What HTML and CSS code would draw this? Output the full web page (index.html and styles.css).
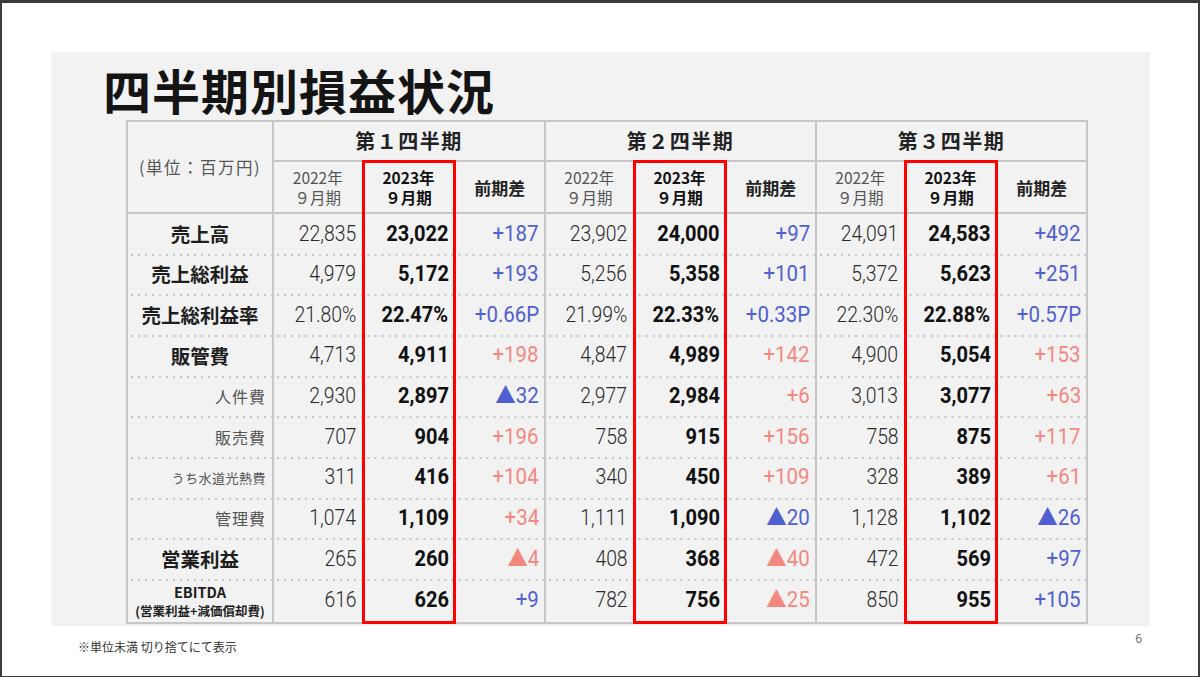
FILE: index.html
```html
<!DOCTYPE html>
<html lang="ja">
<head>
<meta charset="utf-8">
<title>四半期別損益状況</title>
<link rel="stylesheet" href="styles.css">
</head>
<body>
<div class="frame">
  <div class="panel">
    <h1 class="title">四半期別損益状況</h1>
    <table class="pl">
      <colgroup>
        <col class="c-label">
        <col class="c90"><col class="c91"><col class="c91">
        <col class="c89"><col class="c91"><col class="c91">
        <col class="c89"><col class="c91"><col class="c91">
      </colgroup>
      <thead>
        <tr class="h1row">
          <th class="unit" rowspan="2">(単位：百万円)</th>
          <th class="qh" colspan="3">第１四半期</th>
          <th class="qh" colspan="3">第２四半期</th>
          <th class="qh" colspan="3">第３四半期</th>
        </tr>
        <tr class="h2row">
          <th class="sh prev q"><span class="l1">2022年</span><span class="l2">９月期</span></th>
          <th class="sh cur hl"><span class="l1">2023年</span><span class="l2">９月期</span></th>
          <th class="sh diffh">前期差</th>
          <th class="sh prev q"><span class="l1">2022年</span><span class="l2">９月期</span></th>
          <th class="sh cur hl"><span class="l1">2023年</span><span class="l2">９月期</span></th>
          <th class="sh diffh">前期差</th>
          <th class="sh prev q"><span class="l1">2022年</span><span class="l2">９月期</span></th>
          <th class="sh cur hl"><span class="l1">2023年</span><span class="l2">９月期</span></th>
          <th class="sh diffh">前期差</th>
        </tr>
      </thead>
      <tbody>
        <tr class="first">
          <th class="lab main">売上高</th>
          <td class="prev q"><span class="n">22,835</span></td><td class="cur hl"><span class="n">23,022</span></td><td class="diff up"><span class="n">+187</span></td>
          <td class="prev q"><span class="n">23,902</span></td><td class="cur hl"><span class="n">24,000</span></td><td class="diff up"><span class="n">+97</span></td>
          <td class="prev q"><span class="n">24,091</span></td><td class="cur hl"><span class="n">24,583</span></td><td class="diff up"><span class="n">+492</span></td>
        </tr>
        <tr>
          <th class="lab main">売上総利益</th>
          <td class="prev q"><span class="n">4,979</span></td><td class="cur hl"><span class="n">5,172</span></td><td class="diff up"><span class="n">+193</span></td>
          <td class="prev q"><span class="n">5,256</span></td><td class="cur hl"><span class="n">5,358</span></td><td class="diff up"><span class="n">+101</span></td>
          <td class="prev q"><span class="n">5,372</span></td><td class="cur hl"><span class="n">5,623</span></td><td class="diff up"><span class="n">+251</span></td>
        </tr>
        <tr>
          <th class="lab main">売上総利益率</th>
          <td class="prev q"><span class="n">21.80%</span></td><td class="cur hl"><span class="n">22.47%</span></td><td class="diff up"><span class="n">+0.66P</span></td>
          <td class="prev q"><span class="n">21.99%</span></td><td class="cur hl"><span class="n">22.33%</span></td><td class="diff up"><span class="n">+0.33P</span></td>
          <td class="prev q"><span class="n">22.30%</span></td><td class="cur hl"><span class="n">22.88%</span></td><td class="diff up"><span class="n">+0.57P</span></td>
        </tr>
        <tr>
          <th class="lab main">販管費</th>
          <td class="prev q"><span class="n">4,713</span></td><td class="cur hl"><span class="n">4,911</span></td><td class="diff dn"><span class="n">+198</span></td>
          <td class="prev q"><span class="n">4,847</span></td><td class="cur hl"><span class="n">4,989</span></td><td class="diff dn"><span class="n">+142</span></td>
          <td class="prev q"><span class="n">4,900</span></td><td class="cur hl"><span class="n">5,054</span></td><td class="diff dn"><span class="n">+153</span></td>
        </tr>
        <tr>
          <th class="lab sub">人件費</th>
          <td class="prev q"><span class="n">2,930</span></td><td class="cur hl"><span class="n">2,897</span></td><td class="diff up"><span class="n">▲32</span></td>
          <td class="prev q"><span class="n">2,977</span></td><td class="cur hl"><span class="n">2,984</span></td><td class="diff dn"><span class="n">+6</span></td>
          <td class="prev q"><span class="n">3,013</span></td><td class="cur hl"><span class="n">3,077</span></td><td class="diff dn"><span class="n">+63</span></td>
        </tr>
        <tr>
          <th class="lab sub">販売費</th>
          <td class="prev q"><span class="n">707</span></td><td class="cur hl"><span class="n">904</span></td><td class="diff dn"><span class="n">+196</span></td>
          <td class="prev q"><span class="n">758</span></td><td class="cur hl"><span class="n">915</span></td><td class="diff dn"><span class="n">+156</span></td>
          <td class="prev q"><span class="n">758</span></td><td class="cur hl"><span class="n">875</span></td><td class="diff dn"><span class="n">+117</span></td>
        </tr>
        <tr>
          <th class="lab sub small">うち水道光熱費</th>
          <td class="prev q"><span class="n">311</span></td><td class="cur hl"><span class="n">416</span></td><td class="diff dn"><span class="n">+104</span></td>
          <td class="prev q"><span class="n">340</span></td><td class="cur hl"><span class="n">450</span></td><td class="diff dn"><span class="n">+109</span></td>
          <td class="prev q"><span class="n">328</span></td><td class="cur hl"><span class="n">389</span></td><td class="diff dn"><span class="n">+61</span></td>
        </tr>
        <tr>
          <th class="lab sub">管理費</th>
          <td class="prev q"><span class="n">1,074</span></td><td class="cur hl"><span class="n">1,109</span></td><td class="diff dn"><span class="n">+34</span></td>
          <td class="prev q"><span class="n">1,111</span></td><td class="cur hl"><span class="n">1,090</span></td><td class="diff up"><span class="n">▲20</span></td>
          <td class="prev q"><span class="n">1,128</span></td><td class="cur hl"><span class="n">1,102</span></td><td class="diff up"><span class="n">▲26</span></td>
        </tr>
        <tr>
          <th class="lab main">営業利益</th>
          <td class="prev q"><span class="n">265</span></td><td class="cur hl"><span class="n">260</span></td><td class="diff dn"><span class="n">▲4</span></td>
          <td class="prev q"><span class="n">408</span></td><td class="cur hl"><span class="n">368</span></td><td class="diff dn"><span class="n">▲40</span></td>
          <td class="prev q"><span class="n">472</span></td><td class="cur hl"><span class="n">569</span></td><td class="diff up"><span class="n">+97</span></td>
        </tr>
        <tr class="last">
          <th class="lab ebitda"><span class="eb1">EBITDA</span><span class="eb2">(営業利益+減価償却費)</span></th>
          <td class="prev q"><span class="n">616</span></td><td class="cur hl"><span class="n">626</span></td><td class="diff up"><span class="n">+9</span></td>
          <td class="prev q"><span class="n">782</span></td><td class="cur hl"><span class="n">756</span></td><td class="diff dn"><span class="n">▲25</span></td>
          <td class="prev q"><span class="n">850</span></td><td class="cur hl"><span class="n">955</span></td><td class="diff up"><span class="n">+105</span></td>
        </tr>
      </tbody>
    </table>
  </div>
  <div class="foot">
    <span class="note">※単位未満 切り捨てにて表示</span>
    <span class="page">6</span>
  </div>
</div>
</body>
</html>
```

FILE: styles.css
```css
html, body {
  margin: 0;
  padding: 0;
  background: #ffffff;
}

body {
  font-family: "Noto Sans CJK JP", "Noto Sans", sans-serif;
  color: #222;
}

.frame {
  width: 1200px;
  height: 677px;
  box-sizing: border-box;
  border: 2px solid #3c3c3c;
  border-top-width: 3px;
  border-bottom-width: 1px;
  background: #fff;
  overflow: hidden;
}

.panel {
  margin: 49px 0 0 49px;
  width: 1099px;
  height: 574px;
  background: #f2f2f2;
  box-sizing: border-box;
  padding-top: 13px;
}

.title {
  margin: 0 0 7px 52px;
  font-family: "Noto Sans CJK JP", sans-serif;
  font-size: 48px;
  line-height: 48px;
  font-weight: 700;
  letter-spacing: 1px;
  color: #141414;
}

.pl {
  margin-left: 75px;
  width: 960px;
  table-layout: fixed;
  border-collapse: collapse;
  border: 2px solid #c6c6c6;
}

.c-label { width: 146px; }
.c89 { width: 89px; }
.c90 { width: 90px; }
.c91 { width: 91px; }

.pl th, .pl td {
  padding: 0;
}

.h1row { height: 40px; }
.h2row { height: 52px; }
.pl tbody tr { height: 40.67px; }
.pl tbody tr.last { height: 44px; }

.unit {
  border-right: 2px solid #c6c6c6;
  border-bottom: 2px solid #c6c6c6;
  font-size: 16.5px;
  font-weight: 400;
  color: #555;
  text-align: center;
  vertical-align: middle;
  white-space: nowrap;
  letter-spacing: 1.5px;
}

.qh {
  border-left: 2px solid #c6c6c6;
  border-bottom: 2px solid #c6c6c6;
  font-size: 20px;
  font-weight: 700;
  color: #222;
  text-align: center;
  vertical-align: middle;
  letter-spacing: 1.5px;
}

.sh {
  font-size: 15.5px;
  text-align: center;
  vertical-align: middle;
  border-bottom: 2px solid #c6c6c6;
}

.sh .l1,
.sh .l2 {
  display: block;
  height: 20px;
  line-height: 20px;
}

.sh.prev {
  font-weight: 400;
  color: #555;
}

.sh.cur {
  font-weight: 700;
  color: #111;
}

.sh.diffh {
  font-size: 17px;
  font-weight: 700;
  color: #222;
}

.q {
  border-left: 2px solid #c6c6c6;
}

.hl {
  border-left: 3px solid #ff0000;
  border-right: 3px solid #ff0000;
}

.h2row .hl {
  border-top: 3px solid #ff0000;
}

.last .hl {
  border-bottom: 3px solid #ff0000;
}

.pl tbody tr:not(.first) th,
.pl tbody tr:not(.first) td {
  background-image: linear-gradient(to right, #c4c4c4 2px, transparent 2px);
  background-size: 7px 2px;
  background-repeat: repeat-x;
  background-position: 3px 0;
}

.pl tbody td {
  font-family: Roboto, "Noto Sans CJK JP", sans-serif;
  font-size: 22px;
  line-height: 24px;
  text-align: right;
  padding-right: 5px;
  vertical-align: middle;
  white-space: nowrap;
}

.n {
  display: inline-block;
  transform-origin: right center;
}

.pl tbody td.prev {
  font-weight: 300;
  color: #2a2a2a;
}

.prev .n { transform: scaleX(0.88); }

.pl tbody td.cur {
  font-weight: 700;
  color: #111;
  padding-right: 4px;
}

.cur .n { transform: scaleX(0.91); }

.pl tbody td.diff {
  font-weight: 400;
  padding-right: 5px;
}

.diff .n { transform: scaleX(0.93); }

.up { color: #5060d0; }
.dn { color: #f2887f; }

.lab {
  border-right: 2px solid #c6c6c6;
  vertical-align: middle;
  white-space: nowrap;
}

.lab.main {
  font-size: 19.5px;
  font-weight: 700;
  color: #1e1e1e;
  text-align: center;
}

.lab.sub {
  font-size: 16px;
  font-weight: 400;
  color: #555;
  text-align: right;
  padding-right: 6px;
  letter-spacing: 1px;
}

.lab.sub.small {
  font-size: 13px;
  letter-spacing: 0.5px;
}

.lab.ebitda {
  text-align: center;
  font-weight: 700;
  color: #1e1e1e;
}

.eb1 {
  display: block;
  font-size: 14.5px;
  line-height: 21px;
}

.eb2 {
  display: block;
  font-size: 12.5px;
  line-height: 18px;
}

.foot {
  display: flex;
  justify-content: space-between;
  align-items: flex-start;
  padding: 0 56px 0 76px;
}

.note {
  margin-top: 14px;
  font-size: 12px;
  line-height: 14px;
  color: #333;
}

.page {
  margin-top: 6px;
  font-family: "Noto Sans", sans-serif;
  font-size: 12px;
  line-height: 14px;
  color: #777;
}
```
